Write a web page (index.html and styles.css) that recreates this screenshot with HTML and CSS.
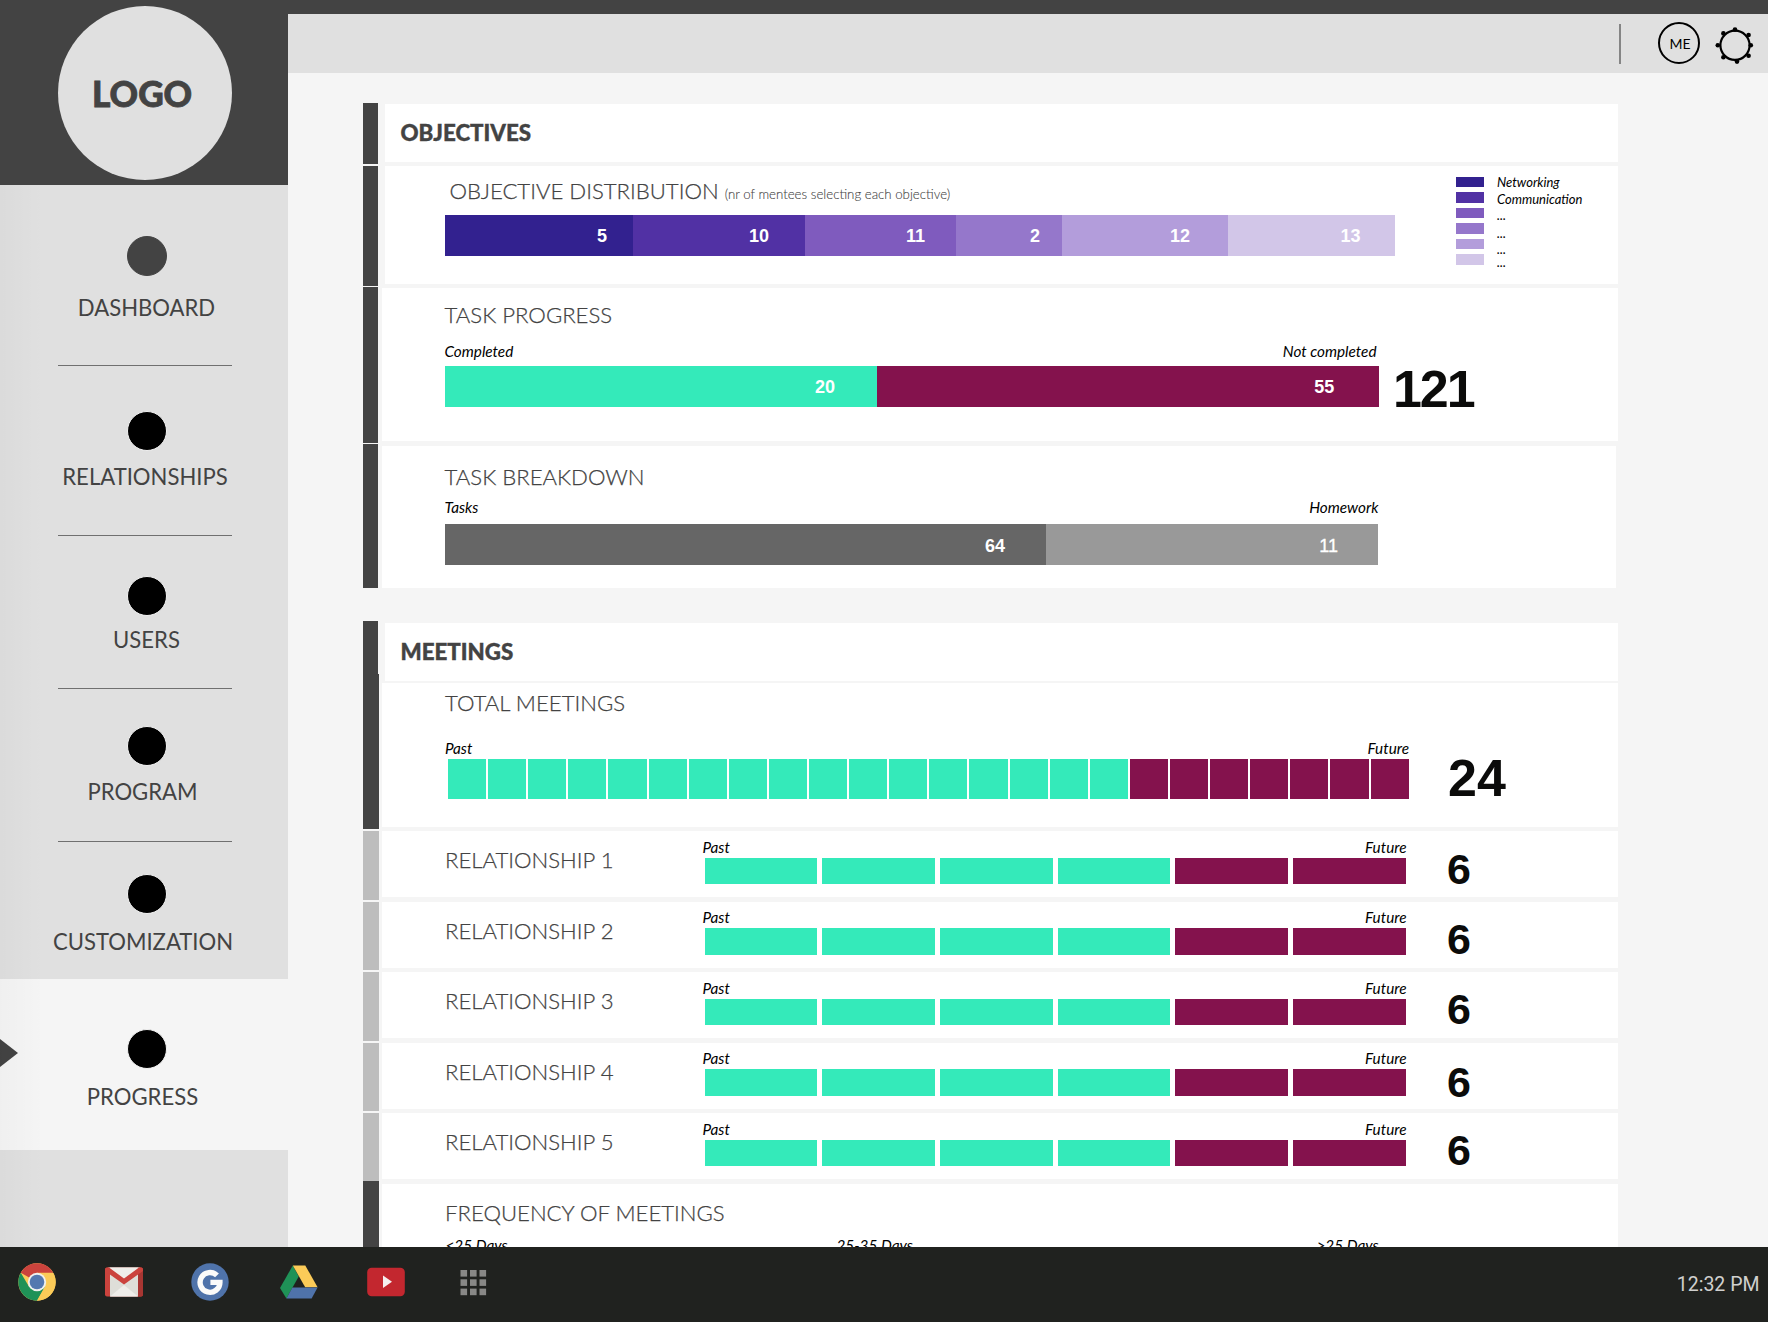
FILE: index.html
```html
<!DOCTYPE html>
<html lang="en">
<head>
<meta charset="utf-8">
<title>Progress</title>
<link rel="stylesheet" href="styles.css">
</head>
<body>
<div class="app">
  <aside class="sidebar">
    <div class="brand"><div class="logo">LOGO</div></div>
    <nav class="nav">
      <a class="item dashboard"><i class="dot dim"></i><span>DASHBOARD</span></a>
      <a class="item relationships"><i class="dot"></i><span>RELATIONSHIPS</span></a>
      <a class="item users"><i class="dot"></i><span>USERS</span></a>
      <a class="item program"><i class="dot"></i><span>PROGRAM</span></a>
      <a class="item customization"><i class="dot"></i><span>CUSTOMIZATION</span></a>
      <a class="item progress"><i class="dot"></i><span>PROGRESS</span><i class="pointer"></i></a>
    </nav>
    <div class="shade"></div>
  </aside>

  <div class="main">
    <header class="topbar">
      <i class="divider"></i>
      <div class="avatar">ME</div>
      <svg class="gear" width="40" height="38" viewBox="0 0 40 38">
        <circle cx="20" cy="19.3" r="14.6" fill="none" stroke="#000" stroke-width="2.2"/>
        <circle cx="20" cy="3.6" r="2.3"/><circle cx="33.6" cy="9" r="2.3"/><circle cx="35.8" cy="19.3" r="2.3"/><circle cx="33.6" cy="29.7" r="2.3"/><circle cx="22" cy="35.6" r="2.3"/><circle cx="8.4" cy="31.3" r="2.3"/><circle cx="2.8" cy="19.3" r="2.3"/><circle cx="8.4" cy="7.4" r="2.3"/>
      </svg>
    </header>

    <section class="objectives">
      <div class="row head"><i class="strip"></i><div class="card"><h2>OBJECTIVES</h2></div></div>

      <div class="row distribution"><i class="strip"></i>
        <div class="card">
          <div class="chart">
            <h3>OBJECTIVE DISTRIBUTION <small>(nr of mentees selecting each objective)</small></h3>
            <div class="bar">
              <b class="p1" style="width:188px">5</b><b class="p2" style="width:172px">10</b><b class="p3" style="width:151px">11</b><b class="p4" style="width:106px">2</b><b class="p5" style="width:166px">12</b><b class="p6" style="width:166.5px">13</b>
            </div>
          </div>
          <div class="swatches"><i class="p1"></i><i class="p2"></i><i class="p3"></i><i class="p4"></i><i class="p5"></i><i class="p6"></i></div>
          <ul class="legend"><li>Networking</li><li>Communication</li><li>...</li><li>...</li><li>...</li><li>...</li></ul>
        </div>
      </div>

      <div class="row tasks"><i class="strip"></i>
        <div class="card">
          <h3>TASK PROGRESS</h3>
          <div class="ends"><em>Completed</em><em>Not completed</em></div>
          <div class="line">
            <div class="bar"><b class="done" style="width:432px">20</b><b class="todo" style="width:502.4px">55</b></div>
            <strong class="big">121</strong>
          </div>
        </div>
      </div>

      <div class="row breakdown"><i class="strip"></i>
        <div class="card">
          <h3>TASK BREAKDOWN</h3>
          <div class="ends"><em>Tasks</em><em>Homework</em></div>
          <div class="bar"><b class="g1" style="width:601px">64</b><b class="g2" style="width:332.5px">11</b></div>
        </div>
      </div>
    </section>

    <section class="meetings">
      <div class="row head"><i class="strip"></i><div class="card"><h2>MEETINGS</h2></div></div>

      <div class="row total"><i class="strip"></i>
        <div class="card">
          <h3>TOTAL MEETINGS</h3>
          <div class="ends"><em>Past</em><em>Future</em></div>
          <div class="line">
            <div class="cells"><i></i><i></i><i></i><i></i><i></i><i></i><i></i><i></i><i></i><i></i><i></i><i></i><i></i><i></i><i></i><i></i><i></i><i class="f"></i><i class="f"></i><i class="f"></i><i class="f"></i><i class="f"></i><i class="f"></i><i class="f"></i></div>
            <strong class="big">24</strong>
          </div>
        </div>
      </div>

      <div class="relations">
        <div class="row rel"><i class="strip"></i><div class="card"><h3>RELATIONSHIP 1</h3><div class="span"><div class="ends"><em>Past</em><em>Future</em></div><div class="cells"><i></i><i></i><i></i><i></i><i class="f"></i><i class="f"></i></div></div><strong>6</strong></div></div>
        <div class="row rel"><i class="strip"></i><div class="card"><h3>RELATIONSHIP 2</h3><div class="span"><div class="ends"><em>Past</em><em>Future</em></div><div class="cells"><i></i><i></i><i></i><i></i><i class="f"></i><i class="f"></i></div></div><strong>6</strong></div></div>
        <div class="row rel"><i class="strip"></i><div class="card"><h3>RELATIONSHIP 3</h3><div class="span"><div class="ends"><em>Past</em><em>Future</em></div><div class="cells"><i></i><i></i><i></i><i></i><i class="f"></i><i class="f"></i></div></div><strong>6</strong></div></div>
        <div class="row rel"><i class="strip"></i><div class="card"><h3>RELATIONSHIP 4</h3><div class="span"><div class="ends"><em>Past</em><em>Future</em></div><div class="cells"><i></i><i></i><i></i><i></i><i class="f"></i><i class="f"></i></div></div><strong>6</strong></div></div>
        <div class="row rel"><i class="strip"></i><div class="card"><h3>RELATIONSHIP 5</h3><div class="span"><div class="ends"><em>Past</em><em>Future</em></div><div class="cells"><i></i><i></i><i></i><i></i><i class="f"></i><i class="f"></i></div></div><strong>6</strong></div></div>
      </div>

      <div class="row frequency"><i class="strip"></i>
        <div class="card">
          <h3>FREQUENCY OF MEETINGS</h3>
          <div class="ranges"><em>&lt;25 Days</em><em>25-35 Days</em><em>&gt;25 Days</em></div>
        </div>
      </div>
    </section>
  </div>
</div>

<footer class="taskbar">
  <div class="shelf">
    <svg width="38" height="38" viewBox="0 0 38 38">
      <circle cx="19" cy="19" r="18.7" fill="#fbcb58"/>
      <path d="M19 19 L2.8 9.7 A18.7 18.7 0 0 1 35.2 9.7 L19 9.7 Z" fill="#cb433d"/>
      <path d="M19 19 L10.9 23.6 L2.8 9.7 A18.7 18.7 0 0 0 19 37.7 L27 23.6 Z" fill="#1f9257"/>
      <path d="M19 37.7 L27.2 23.6 L19 10.3 L35.5 10.3 A18.7 18.7 0 0 1 19 37.7 Z" fill="#fbcb58"/>
      <circle cx="19" cy="19" r="9.2" fill="#f0f0ee"/>
      <circle cx="19" cy="19" r="7.3" fill="#5478b0"/>
    </svg>
    <svg width="38" height="30" viewBox="0 0 38 30">
      <rect x="0" y="0.5" width="38" height="29" rx="2" fill="#cb433d"/>
      <path d="M33 .5 L36 .5 Q38 .5 38 2.5 L38 27.5 Q38 29.5 36 29.5 L33 29.5 Z" fill="#a83632"/>
      <rect x="5" y="0.5" width="28" height="29" fill="#deded8"/>
      <path d="M5 29.5 L19 18 L33 29.5 Z" fill="#efeeea"/>
      <path d="M3 .5 L35 .5 L19 12.5 Z" fill="#efeeea"/>
      <path d="M0 2.5 Q0 .5 2.5 .5 L4 .5 L19 11.5 L34 .5 L35.5 .5 Q38 .5 38 2.5 L38 4 L19 17.5 L0 4 Z" fill="#cb433d"/>
    </svg>
    <svg class="google" width="38" height="38" viewBox="0 0 38 38">
      <circle cx="19" cy="19" r="18.7" fill="#4f73aa"/>
      <path d="M26 12.4 A9.9 9.9 0 1 0 28.9 19.4 L19.4 19.4" fill="none" stroke="#fbfbfa" stroke-width="5.4"/>
    </svg>
    <svg class="drive" width="38" height="34" viewBox="0 0 38 34">
      <path d="M12.8 .5 L0 23 L6.4 33.5 L18.7 11.6 Z" fill="#1f9257"/>
      <path d="M12.8 .5 L25.3 .5 L37.6 22.3 L25.2 22.3 Z" fill="#fbcb58"/>
      <path d="M12.4 22.6 L37.6 22.6 L31.6 33.5 L6.4 33.5 Z" fill="#4f73aa"/>
    </svg>
    <svg width="38" height="30" viewBox="0 0 38 30">
      <rect x=".2" y=".8" width="37.6" height="28.4" rx="4.5" fill="#c3272f"/>
      <path d="M16 8.6 L25 14.8 L16 21 Z" fill="#f5eeee"/>
    </svg>
    <svg width="27" height="27" viewBox="0 0 27 27" fill="#888886">
      <rect x=".5" y="1" width="6.6" height="6.6"/><rect x="10" y="1" width="6.6" height="6.6"/><rect x="19.5" y="1" width="6.6" height="6.6"/>
      <rect x=".5" y="10.3" width="6.6" height="6.6"/><rect x="10" y="10.3" width="6.6" height="6.6"/><rect x="19.5" y="10.3" width="6.6" height="6.6"/>
      <rect x=".5" y="19.6" width="6.6" height="6.6"/><rect x="10" y="19.6" width="6.6" height="6.6"/><rect x="19.5" y="19.6" width="6.6" height="6.6"/>
    </svg>
  </div>
  <time>12:32 PM</time>
</footer>
</body>
</html>
```
FILE: styles.css
```css
* { box-sizing: border-box; }

body {
  margin: 0;
  width: 1768px;
  height: 1322px;
  overflow: hidden;
  background: #f5f5f5;
  color: #434343;
  font-family: Lato, "Liberation Sans", sans-serif;
}

i { display: block; flex: none; }
h2, h3, ul { margin: 0; padding: 0; font-weight: 300; list-style: none; }

.app {
  display: flex;
  height: 1247px;
  padding-top: 14px;
  overflow: hidden;
  background: linear-gradient(#434343 14px, #f5f5f5 14px);
}

/* Sidebar */
.sidebar { position: relative; flex: none; width: 288px; background: #e0e0e0; }
.brand { height: 171px; background: #434343; }
.logo {
  width: 174px;
  height: 174px;
  margin-left: 58px;
  position: relative;
  top: -8.5px;
  border-radius: 50%;
  background: #e0e0e0;
  font-size: 35.2px;
  font-weight: 900;
  line-height: 174px;
  text-indent: 34px;
  -webkit-text-stroke: .8px #434343;
}
.item {
  display: flex;
  flex-direction: column;
  align-items: center;
  position: relative;
  padding-right: 1px;
  font-size: 22.1px;
  line-height: 26px;
}
.item:not(.customization):not(.progress)::after {
  content: "";
  width: 174px;
  height: 1px;
  margin: auto 0 0 3px;
  background: #707070;
}
.dot { width: 40px; height: 40px; margin-left: 6px; border: 1px solid #f3f3f3; border-radius: 50%; background: #000; }
.dot.dim { border-color: #434343; background: #434343; }
.dashboard { height: 181px; padding-top: 51px; }
.dashboard span { margin: 19px 0 0 6px; }
.relationships { height: 170px; padding-top: 45px; }
.relationships span { margin: 13px 0 0 3px; }
.users { height: 153px; padding-top: 40px; }
.users span { margin: 11px 0 0 6px; }
.program { height: 153px; padding-top: 37px; }
.program span { margin: 13px 2px 0 0; }
.customization { height: 137px; padding-top: 32px; }
.customization span { margin: 15px 1px 0 0; }
.progress { height: 171px; padding-top: 50px; background: #f5f5f5; }
.progress span { margin: 15px 2px 0 0; }
.pointer {
  position: absolute;
  left: 0;
  top: 60px;
  border-style: solid;
  border-width: 14px 0 14px 18px;
  border-color: transparent transparent transparent #434343;
}
.shade {
  position: absolute;
  inset: 171px auto 0 0;
  width: 44px;
  background: linear-gradient(90deg, rgba(0,0,0,.025), transparent);
}

/* Top bar */
.main { flex: 1; }
.topbar {
  display: flex;
  align-items: flex-start;
  height: 59px;
  padding-right: 13px;
  justify-content: flex-end;
  background: #e0e0e0;
}
.divider { width: 2px; height: 40px; margin: 10px 37px 0 0; background: #858585; }
.avatar {
  width: 42px;
  height: 42px;
  margin: 8px 15px 0 0;
  border: 2px solid #000;
  border-radius: 50%;
  color: #000;
  font-size: 14px;
  line-height: 40px;
  text-align: center;
  text-indent: 2px;
}
.gear { margin-top: 12px; }

/* Cards */
section { padding-left: 74.5px; }
.objectives { padding-top: 30px; }
.row { display: flex; align-items: flex-start; }
.strip { width: 15px; margin: 0 3.5px 0 .5px; background: #434343; }
.card { width: 1236px; padding-left: 63px; background: #fff; }
.head .strip, .distribution .strip { margin-right: 7px; }
.head .card { width: 1233px; height: 58px; padding-left: 15.5px; }
h2 { font-size: 22.3px; font-weight: 900; line-height: 28px; -webkit-text-stroke: .4px #434343; }
h3 { height: 28px; font-size: 22.15px; line-height: 29px; white-space: nowrap; -webkit-text-stroke: .25px #434343; }
small { font-size: 13.25px; -webkit-text-stroke-width: .1px; }
em { color: #000; font-size: 15.3px; line-height: 20px; }
.ends { display: flex; justify-content: space-between; }
.line { display: flex; align-items: flex-start; }
strong { color: #0b0b0a; font: bold 52px/40px "Liberation Sans", Arial, sans-serif; }
.bar { display: flex; height: 41px; color: #fff; font: bold 18px/43px "Liberation Sans", Arial, sans-serif; }
.bar b { text-align: right; padding-right: 34px; }

.objectives .head { height: 63px; }
.objectives .head .strip { height: 61px; }
.objectives .head .card { margin-top: 1px; padding-top: 15px; }

.distribution { height: 121px; }
.distribution .strip { height: 120px; }
.distribution .card { display: flex; width: 1233px; height: 118px; padding: 10px 0 0 60px; }
.distribution h3 { padding-left: 4.5px; }
.distribution .chart { width: 1011px; }
.distribution .bar { margin-top: 11.4px; line-height: 42.5px; }
.distribution .bar .p1 { padding-right: 26px; }
.distribution .bar .p2 { padding-right: 36px; }
.distribution .bar .p3 { padding-right: 31px; }
.distribution .bar .p4 { padding-right: 22px; }
.distribution .bar .p5 { padding-right: 38px; }
.p1 { background: #32218f; }
.p2 { background: #5131a4; }
.p3 { background: #7f5bbe; }
.p4 { background: #9577cb; }
.p5 { background: #b39ddb; }
.p6 { background: #d2c6e8; }
.swatches { display: grid; grid-auto-rows: 10.4px; align-content: start; gap: 5.1px; width: 28px; margin: .7px 13px 0 0; }
.legend { margin-top: -2px; color: #000; font-size: 13px; font-style: italic; font-weight: 400; line-height: 16px; }
.legend li:nth-child(2) { margin-top: 1px; }
.legend li:nth-child(4) { margin-top: 2px; }
.legend li:nth-child(6) { margin-top: -3px; }

.tasks { height: 157px; }
.tasks .strip { height: 156px; }
.tasks .card { height: 153px; margin-top: 1px; padding-top: 12px; }
.tasks .ends { width: 932px; margin: 12.5px 0 5.5px; }
.tasks .done { padding-right: 41.5px; }
.tasks .todo { padding-right: 44.5px; }
.tasks strong { margin: 3px 0 0 14px; letter-spacing: -2px; }
.done { background: #34eaba; }
.todo { background: #84124d; }

.breakdown .strip { height: 144px; }
.breakdown .card { width: 1234.5px; height: 142px; margin-top: 2px; padding-top: 16px; }
.breakdown .ends { width: 934px; margin: 7px 0 7.4px; }
.breakdown .bar { line-height: 44px; }
.breakdown .g1 { padding-right: 40.5px; background: #666; }
.breakdown .g2 { padding-right: 40px; background: #999; font-weight: 400; -webkit-text-stroke: .3px #fff; }

.meetings { padding-top: 33px; }
.meetings .head { height: 53px; }
.meetings .head .strip { height: 53px; }
.meetings .head .card { flex: none; margin-top: 2px; padding-top: 15px; }
.meetings .strip { height: 155px; }
.meetings .row:not(.head) .strip { width: 16.5px; margin: 0 2.5px 0 0; }
.total { height: 157px; }
.total .card { height: 144px; margin-top: 9px; padding-top: 5px; }
.total .ends { width: 964px; margin: 22px 0 1px; }
.cells { display: flex; }
.cells i { flex: 1; background: #34eaba; }
.cells .f { background: #84124d; }
.total .cells { width: 960.5px; height: 39.5px; gap: 2px; margin-left: 3px; }
.total strong { margin: -1px 0 0 39.5px; }
.meetings .row:not(.head) .card { padding-left: 63.5px; }

.rel { height: 70.5px; }
.meetings .rel .strip { height: 68.5px; background: #bdbdbd; }
.rel .card { display: flex; height: 66px; }
.rel h3 { width: 257.5px; margin-top: 14px; }
.span { width: 704px; padding-top: 5.5px; }
.span .cells { width: 701px; height: 26.5px; gap: 5px; margin: 1px 0 0 2px; }
.rel strong { margin: 18px 0 0 40.5px; font-size: 43px; }
.rel:nth-child(2) strong { margin-top: 17.5px; }
.rel:nth-child(3) strong { margin-top: 16.8px; }
.rel:nth-child(4) strong { margin-top: 19px; }
.rel:nth-child(5) strong { margin-top: 16.8px; }

.frequency { margin-top: -2.5px; }
.frequency .card { height: 160px; margin-top: 2.5px; padding-top: 14.5px; }
.ranges { display: grid; grid-template-columns: 391px 480px auto; margin: 9px 0 0 .5px; }

/* Taskbar */
.taskbar {
  display: flex;
  align-items: center;
  justify-content: space-between;
  height: 75px;
  padding: 0 8.5px 5px 18px;
  background: #20221f;
}
.shelf { display: flex; align-items: center; gap: 49px; }
.shelf .google { margin-left: -1px; }
.shelf .drive { margin-left: 2px; }
.shelf svg:last-child { margin-left: 6px; }
time { color: #d0d0ce; font: 19.5px/24px Roboto, "Liberation Sans", sans-serif; padding-top: 5px; }
```
